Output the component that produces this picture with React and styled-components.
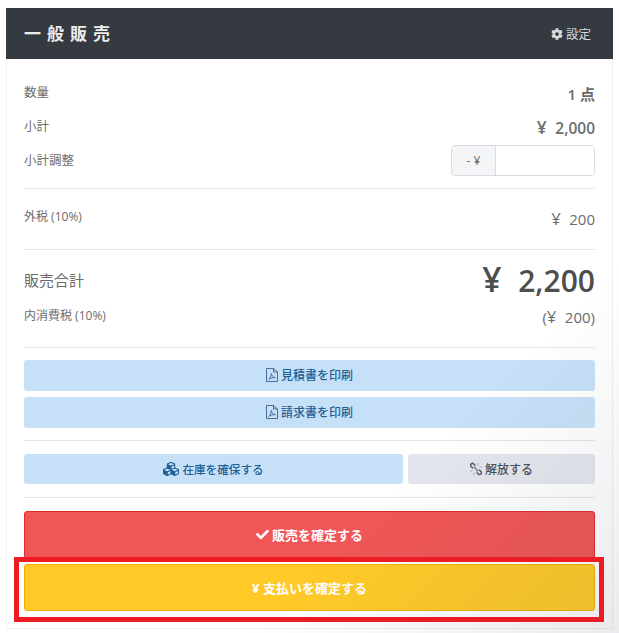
import React from 'react';
import styled, { createGlobalStyle } from "styled-components";
import { FaCog, FaCubes, FaCheck } from "react-icons/fa";

const fontStack = `"Open Sans", "Noto Sans CJK JP", sans-serif`;

const GlobalStyle = createGlobalStyle`
html, body {
    margin: 0;
    background: #fff;
}
body {
    font-family: ${fontStack};
    color: #6c6c6c;
}
* {
    box-sizing: border-box;
}
`;

const Page = styled.div`
position: relative;
width: 619px;
height: 633px;
padding: 8px 6px 0;
overflow: hidden;
`;
const Shade = styled.div`
position: absolute;
inset: 0;
pointer-events: none;
background: linear-gradient(135deg, rgba(60, 70, 90, 0) 70%, rgba(60, 70, 90, 0.11) 100%);
`;
const Card = styled.div`
height: 621px;
border: 1px solid #f1f1f3;
border-top: 0;
`;
const Header = styled.div`
display: flex;
align-items: center;
justify-content: space-between;
height: 51px;
margin: 0 -1px;
padding: 0 22px 0 18px;
background: #343a40;
color: #d6d8db;
`;
const Title = styled.h1`
margin: 0 0 2px;
font-size: 17px;
font-weight: 700;
letter-spacing: 6px;
color: #eceded;
`;
const Setting = styled.div`
display: flex;
align-items: center;
gap: 3px;
font-size: 12.5px;
`;
const Body = styled.div`
padding: 18px 17px 0;
`;
const Row = styled.div`
display: flex;
align-items: flex-start;
justify-content: space-between;
height: ${(p) => p.$height}px;
`;
const Label = styled.span`
font-size: ${(p) => p.$size || 12.5}px;
line-height: 18px;
margin-top: ${(p) => p.$top || 0}px;
`;
const Value = styled.span`
font-size: ${(p) => p.$size || 15}px;
font-weight: ${(p) => p.$weight || 400};
line-height: ${(p) => p.$line || 20}px;
margin-top: ${(p) => p.$top || 0}px;
color: ${(p) => p.$color || "#6c6c6c"};
`;
const Yen = styled.span`
margin-right: 0.5em;
font-size: 1.12em;
line-height: 1;
`;
const Divider = styled.hr`
margin: ${(p) => p.$before || 0}px 0 ${(p) => p.$after || 0}px;
border: 0;
border-top: 1px solid #e4e5ea;
`;
const InputGroup = styled.div`
display: flex;
width: 144px;
height: 31px;
border: 1px solid #d8dbe3;
border-radius: 4px;
overflow: hidden;
`;
const Prefix = styled.span`
display: flex;
align-items: center;
justify-content: center;
width: 44px;
border-right: 1px solid #d8dbe3;
background: #f4f5f7;
font-size: 12px;
`;
const Amount = styled.input`
flex: 1;
min-width: 0;
border: 0;
outline: 0;
background: #fff;
`;
const Button = styled.button`
display: flex;
align-items: center;
justify-content: center;
gap: 3px;
flex: ${(p) => p.$flex || "none"};
width: ${(p) => (p.$flex ? "auto" : "100%")};
height: ${(p) => p.$height || 31}px;
padding: 0 0 ${(p) => p.$lift ?? 2}px;
border: 1px solid ${(p) => p.$border || "transparent"};
border-radius: 3px;
background: ${(p) => p.$bg};
color: ${(p) => p.$color};
font-family: ${fontStack};
font-size: ${(p) => p.$size || 12}px;
font-weight: ${(p) => p.$weight || 500};
`;
const ButtonRow = styled.div`
display: flex;
gap: 5px;
`;
const Stack = styled.div`
display: flex;
flex-direction: column;
gap: ${(p) => p.$gap}px;
`;
const Highlight = styled.div`
position: absolute;
left: 14px;
top: 557px;
width: 590px;
height: 65px;
border: 5px solid #ed1c24;
pointer-events: none;
`;

const PdfIcon = () => (
    <svg width="12" height="14" viewBox="0 0 12 14" fill="none" stroke="#4a6a9c" strokeWidth="1">
        <path d="M.5 .5h7l4 3.5v9.5H.5z" />
        <path d="M7.5 .5v3.5h4" />
        <path d="M2.5 11.5c1.5-1 2.7-3.5 2.8-6 .5 2.4 1.8 3.6 4 4.2-2.4-.2-4.4.3-5.8 1.6" />
    </svg>
);

const UnlinkIcon = () => (
    <svg width="12" height="14" viewBox="0 0 12 14" fill="none" stroke="#50565e" strokeWidth="1.4" strokeLinecap="round">
        <path d="M5 3.2 3.8 2a1.8 1.8 0 0 0-2.6 2.6l1.4 1.4" />
        <path d="M7 10.8 8.2 12a1.8 1.8 0 0 0 2.6-2.6L9.4 8" />
        <path d="M4.5 5 7.5 9" stroke="#7a8088" />
        <path d="M8 1v2M11.5 5H10M.5 9H2M4 13v-2" stroke="#a9adb3" strokeWidth="1" />
    </svg>
);

const App = () => {
    const blue = { $bg: "#c6e1f7", $color: "#1f5f96" };
    return (
        <Page>
            <GlobalStyle />
            <Card>
                <Header>
                    <Title>一般販売</Title>
                    <Setting><FaCog size={12} />設定</Setting>
                </Header>
                <Body>
                    <Row $height={34}>
                        <Label $top={7}>数量</Label>
                        <Value $top={7} $weight={600}>1 点</Value>
                    </Row>
                    <Row $height={34}>
                        <Label $top={7}>小計</Label>
                        <Value $top={7} $weight={600} $size={15.5}><Yen>¥</Yen>2,000</Value>
                    </Row>
                    <Row $height={36}>
                        <Label $top={7}>小計調整</Label>
                        <InputGroup>
                            <Prefix>- ¥</Prefix>
                            <Amount />
                        </InputGroup>
                    </Row>
                    <Divider $before={7} />
                    <Row $height={60}>
                        <Label $size={12} $top={19}>外税 (10%)</Label>
                        <Value $top={20}><Yen>¥</Yen>200</Value>
                    </Row>
                    <Divider />
                    <Row $height={50}>
                        <Label $size={15} $top={21}>販売合計</Label>
                        <Value $size={30} $line={36} $weight={600} $top={13} $color="#4e4e4e"><Yen>¥</Yen>2,200</Value>
                    </Row>
                    <Row $height={47}>
                        <Label $size={12} $top={7}>内消費税 (10%)</Label>
                        <Value $top={7}>(<Yen>¥</Yen>200)</Value>
                    </Row>
                    <Divider $after={12} />
                    <Stack $gap={6}>
                        <Button {...blue}><PdfIcon />見積書を印刷</Button>
                        <Button {...blue}><PdfIcon />請求書を印刷</Button>
                    </Stack>
                    <Divider $before={12} $after={13} />
                    <ButtonRow>
                        <Button {...blue} $flex="0 0 379px" $height={30} $lift={1} $size={11.6}><FaCubes size={16} />在庫を確保する</Button>
                        <Button $bg="#e4e6ed" $color="#4a5058" $flex="1" $height={30} $lift={1}><UnlinkIcon />解放する</Button>
                    </ButtonRow>
                    <Divider $before={13} $after={13} />
                    <Stack $gap={5}>
                        <Button $bg="#f05656" $border="#e02b2b" $color="#fff" $height={48} $size={13} $weight={700}><FaCheck size={13} />販売を確定する</Button>
                        <Button $bg="#ffca28" $border="#eeb100" $color="#fff" $height={47} $size={13} $weight={700} $lift={1}>¥ 支払いを確定する</Button>
                    </Stack>
                </Body>
            </Card>
            <Shade />
            <Highlight />
        </Page>
    );
};

export default App;
